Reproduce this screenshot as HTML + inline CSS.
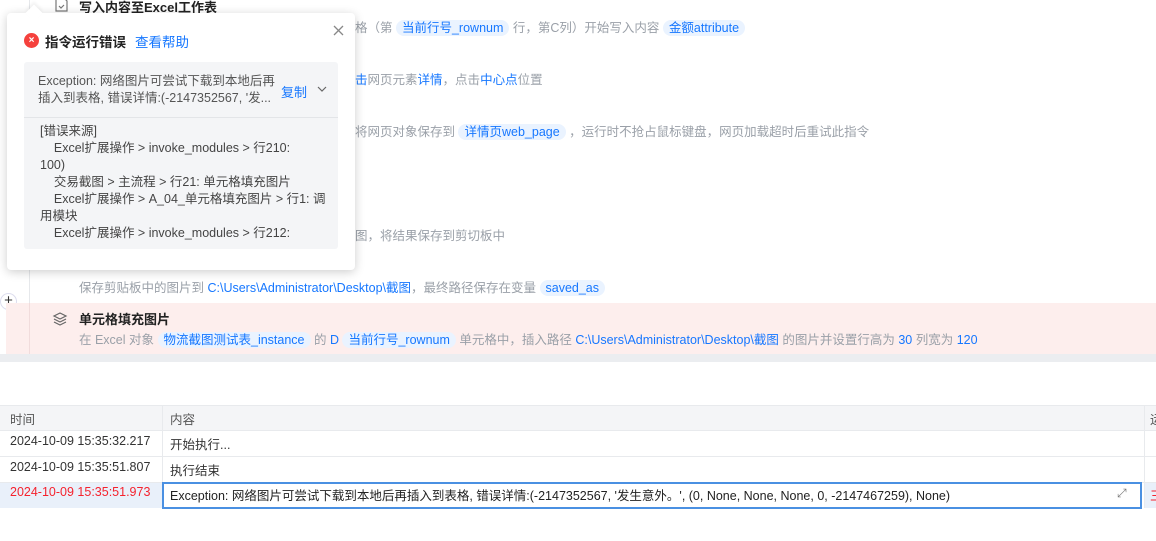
<!DOCTYPE html>
<html><head><meta charset="utf-8"><style>
*{margin:0;padding:0;box-sizing:border-box}
body{width:1156px;height:541px;overflow:hidden;background:#fff;font-family:"Liberation Sans","Noto Sans CJK SC",sans-serif;font-size:12.5px;color:#333;position:relative}
.abs{position:absolute;white-space:nowrap}
.g{color:#9aa0a8}
.b{color:#1677ff}
.tag{background:#eaf3ff;color:#1677ff;border-radius:10px;padding:1px 6px}
.vl{position:absolute;left:29px;top:0;width:1px;height:354px;background:#e6e8eb}
.tb{position:absolute;left:0;width:1156px;border-bottom:1px solid #e8eaed}
</style></head><body>
<div class="vl"></div>
<div class="abs" style="left:79px;top:-3px;font-weight:bold;font-size:13px;color:#222">写入内容至Excel工作表</div>
<svg class="abs" style="left:55px;top:-3px" width="14" height="15" viewBox="0 0 14 15" fill="none" stroke="#777" stroke-width="1.2"><path d="M1 1h8l3 3v10H1z M4 9l2 2 3-3"/></svg>
<div class="abs g" style="left:355px;top:17px">格（第 <span class="tag">当前行号_rownum</span> 行，第C列）开始写入内容 <span class="tag">金额attribute</span></div>
<div class="abs g" style="left:355px;top:69px"><span class="b">击</span>网页元素<span class="b">详情</span>，点击<span class="b">中心点</span>位置</div>
<div class="abs g" style="left:355px;top:121px">将网页对象保存到 <span class="tag">详情页web_page</span> ，运行时不抢占鼠标键盘，网页加载超时后重试此指令</div>
<div class="abs g" style="left:355px;top:225px">图，将结果保存到剪切板中</div>
<div class="abs g" style="left:79px;top:277px">保存剪贴板中的图片到 <span class="b">C:\Users\Administrator\Desktop\截图</span>，最终路径保存在变量 <span class="tag">saved_as</span></div>
<div class="abs" style="left:0;top:293px;width:17px;height:17px;border:1px solid #dde;border-radius:50%;background:#fff;text-align:center;line-height:14px;font-size:15px;color:#333">+</div>
<div class="abs" style="left:6px;top:303px;width:1150px;height:51px;background:#fdeeed"></div>
<div class="vl" style="top:303px;height:51px;background:#f1dcdc"></div>
<svg class="abs" style="left:52px;top:311px" width="16" height="16" viewBox="0 0 16 16" fill="none" stroke="#666" stroke-width="1.2"><path d="M8 2L14 5 8 8 2 5z M2 8l6 3 6-3 M2 11l6 3 6-3"/></svg>
<div class="abs" style="left:79px;top:309px;font-weight:bold;font-size:13px;color:#222">单元格填充图片</div>
<div class="abs g" style="left:79px;top:329px">在 Excel 对象 <span class="tag">物流截图测试表_instance</span> 的 <span class="b">D</span> <span class="tag">当前行号_rownum</span> 单元格中，插入路径 <span class="b">C:\Users\Administrator\Desktop\截图</span> 的图片并设置行高为 <span class="b">30</span> 列宽为 <span class="b">120</span></div>
<div class="abs" style="left:0;top:354px;width:1156px;height:8px;background:#ebedf0"></div>
<!-- table -->
<div class="tb" style="top:405px;height:26px;background:#f4f5f7;border-top:1px solid #e8eaed"></div>
<div class="tb" style="top:431px;height:26px"></div>
<div class="tb" style="top:457px;height:26px"></div>
<div class="abs" style="left:0;top:483px;width:163px;height:25px;background:#e9f0fa"></div>
<div class="abs" style="left:1145px;top:483px;width:11px;height:25px;background:#e9f0fa"></div>
<div class="abs" style="left:162px;top:405px;width:1px;height:103px;background:#e8eaed"></div>
<div class="abs" style="left:1144px;top:405px;width:1px;height:103px;background:#e8eaed"></div>
<div class="abs" style="left:10px;top:409px;color:#555">时间</div>
<div class="abs" style="left:170px;top:409px;color:#555">内容</div>
<div class="abs" style="left:10px;top:434px">2024-10-09 15:35:32.217</div>
<div class="abs" style="left:170px;top:434px">开始执行...</div>
<div class="abs" style="left:10px;top:460px">2024-10-09 15:35:51.807</div>
<div class="abs" style="left:170px;top:460px">执行结束</div>
<div class="abs" style="left:10px;top:485px;color:#f5222d">2024-10-09 15:35:51.973</div>
<div class="abs" style="left:162px;top:482px;width:980px;height:27px;border:2px solid #4a90e2;background:#fff"></div>
<div class="abs" style="left:170px;top:485px;color:#222">Exception: 网络图片可尝试下载到本地后再插入到表格, 错误详情:(-2147352567, '发生意外。', (0, None, None, None, 0, -2147467259), None)</div>
<div class="abs" style="left:1117px;top:486px;color:#777;font-size:12px">⤢</div>
<div class="abs" style="left:1150px;top:485px;color:#f5222d">三</div>
<div class="abs" style="left:1150px;top:409px;color:#555">运</div>
<!-- popup -->
<div class="abs" style="left:7px;top:13px;width:348px;height:257px;background:#fff;border-radius:4px;box-shadow:0 2px 10px rgba(0,0,0,.2)"></div>
<div class="abs" style="left:28px;top:7px;width:12px;height:12px;background:#fff;transform:rotate(45deg);box-shadow:-2px -2px 3px rgba(0,0,0,.06)"></div>
<div class="abs" style="left:24px;top:33px;width:15px;height:15px;border-radius:50%;background:#f5413d;color:#fff;font-size:10px;line-height:15px;text-align:center;font-weight:bold">×</div>
<div class="abs" style="left:45px;top:31px;font-weight:bold;font-size:13.5px;color:#222">指令运行错误</div>
<div class="abs b" style="left:135px;top:31px;font-size:13.5px">查看帮助</div>
<svg class="abs" style="left:333px;top:25px" width="11" height="11" viewBox="0 0 11 11" stroke="#888" stroke-width="1.3"><path d="M1 1l9 9M10 1l-9 9"/></svg>
<div class="abs" style="left:24px;top:62px;width:314px;height:187px;background:#f4f5f7;border-radius:3px"></div>
<div class="abs" style="left:24px;top:117px;width:314px;height:1px;background:#e3e5e8"></div>
<div class="abs" style="left:38px;top:73px;color:#555;line-height:17px">Exception: 网络图片可尝试下载到本地后再<br>插入到表格, 错误详情:(-2147352567, '发...</div>
<div class="abs b" style="left:281px;top:82px;font-size:13px">复制</div>
<svg class="abs" style="left:317px;top:86px" width="10" height="7" viewBox="0 0 10 7" fill="none" stroke="#666" stroke-width="1.2"><path d="M1 1l4 4 4-4"/></svg>
<div class="abs" style="left:40px;top:123px;color:#444;line-height:17px;white-space:pre">[错误来源]
    Excel扩展操作 &gt; invoke_modules &gt; 行210:
100)
    交易截图 &gt; 主流程 &gt; 行21: 单元格填充图片
    Excel扩展操作 &gt; A_04_单元格填充图片 &gt; 行1: 调
用模块
    Excel扩展操作 &gt; invoke_modules &gt; 行212:</div>
</body></html>
